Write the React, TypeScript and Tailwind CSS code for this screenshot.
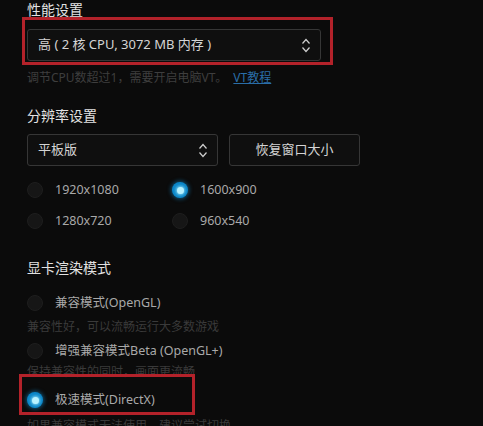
import React from "react";

const font = { fontFamily: '"Noto Sans", "Noto Sans CJK SC", sans-serif' };

function Chevrons() {
  return (
    <svg width="10" height="15" viewBox="0 0 10 15" fill="none" stroke="#cfcfcf" strokeWidth="1.2">
      <path d="M1.5 5.5 L5 1.5 L8.5 5.5" />
      <path d="M1.5 9.5 L5 13.5 L8.5 9.5" />
    </svg>
  );
}

function Radio({ checked, label }: { checked?: boolean; label: string }) {
  return (
    <div className="flex h-[24px] items-center gap-[12px]">
      {checked ? (
        <div className="flex h-[16px] w-[16px] items-center justify-center rounded-full bg-[#0a86c8] shadow-[0_0_4px_1px_rgba(20,150,220,0.55)]">
          <div className="h-[7px] w-[7px] rounded-full bg-[#b8f2ff] shadow-[0_0_3px_1px_rgba(160,235,255,0.8)]" />
        </div>
      ) : (
        <div className="h-[16px] w-[16px] rounded-full border border-[#1e1e1e] bg-[#161616]" />
      )}
      <span className="text-[12.5px] text-[#a9a9a9]">{label}</span>
    </div>
  );
}

export default function App() {
  return (
    <div className="relative h-[426px] w-full overflow-hidden bg-[#0b0b0b]" style={font}>
      <div className="flex flex-col pl-[27px]">
        <div className="h-[20px] text-[14px] leading-[20px] text-[#e2e2e2]">性能设置</div>
        <div className="mt-[9px] flex h-[32px] w-[294px] items-center justify-between rounded-[3px] border border-[#363636] bg-[#0f0f0f] pl-[10px] pr-[9px]">
          <span className="text-[13px] text-[#d4d4d4]">高 ( 2 核 CPU, 3072 MB 内存 )</span>
          <Chevrons />
        </div>
        <div className="mt-[7px] h-[20px] text-[12px] leading-[20px] text-[#3e3e3e]">
          调节CPU数超过1，需要开启电脑VT。
          <span className="ml-[6px] text-[#2a6ea8] underline">VT教程</span>
        </div>
        <div className="mt-[18px] h-[20px] text-[14px] leading-[20px] text-[#e2e2e2]">分辨率设置</div>
        <div className="mt-[8px] flex gap-[11px]">
          <div className="flex h-[32px] w-[191px] items-center justify-between rounded-[3px] border border-[#363636] bg-[#0f0f0f] pl-[10px] pr-[9px]">
            <span className="text-[13px] text-[#d4d4d4]">平板版</span>
            <Chevrons />
          </div>
          <div className="flex h-[32px] w-[131px] items-center justify-center rounded-[3px] border border-[#363636] bg-[#0f0f0f] text-[13px] text-[#d4d4d4]">
            恢复窗口大小
          </div>
        </div>
        <div className="mt-[12px] grid w-[300px] grid-cols-[145px_1fr] gap-y-[7px]">
          <Radio label="1920x1080" />
          <Radio checked label="1600x900" />
          <Radio label="1280x720" />
          <Radio label="960x540" />
        </div>
        <div className="mt-[25px] h-[20px] text-[14px] leading-[20px] text-[#e2e2e2]">显卡渲染模式</div>
        <div className="mt-[13px]">
          <Radio label="兼容模式(OpenGL)" />
        </div>
        <div className="mt-[2px] h-[20px] text-[12px] leading-[20px] text-[#3a3a3a]">兼容性好，可以流畅运行大多数游戏</div>
        <div className="mt-[2px]">
          <Radio label="增强兼容模式Beta (OpenGL+)" />
        </div>
        <div className="h-[18px] text-[12px] leading-[18px] text-[#3a3a3a]">保持兼容性的同时，画面更流畅</div>
        <div className="mt-[7px]">
          <Radio checked label="极速模式(DirectX)" />
        </div>
        <div className="mt-[5px] h-[18px] text-[12px] leading-[18px] text-[#3a3a3a]">如果兼容模式无法使用，建议尝试切换</div>
      </div>
      <div className="pointer-events-none absolute left-[22px] top-[17px] h-[48px] w-[311px] border-[3px] border-[#b3222a]" />
      <div className="pointer-events-none absolute left-[19px] top-[374px] h-[41px] w-[176px] border-[3px] border-[#b3222a]" />
    </div>
  );
}
